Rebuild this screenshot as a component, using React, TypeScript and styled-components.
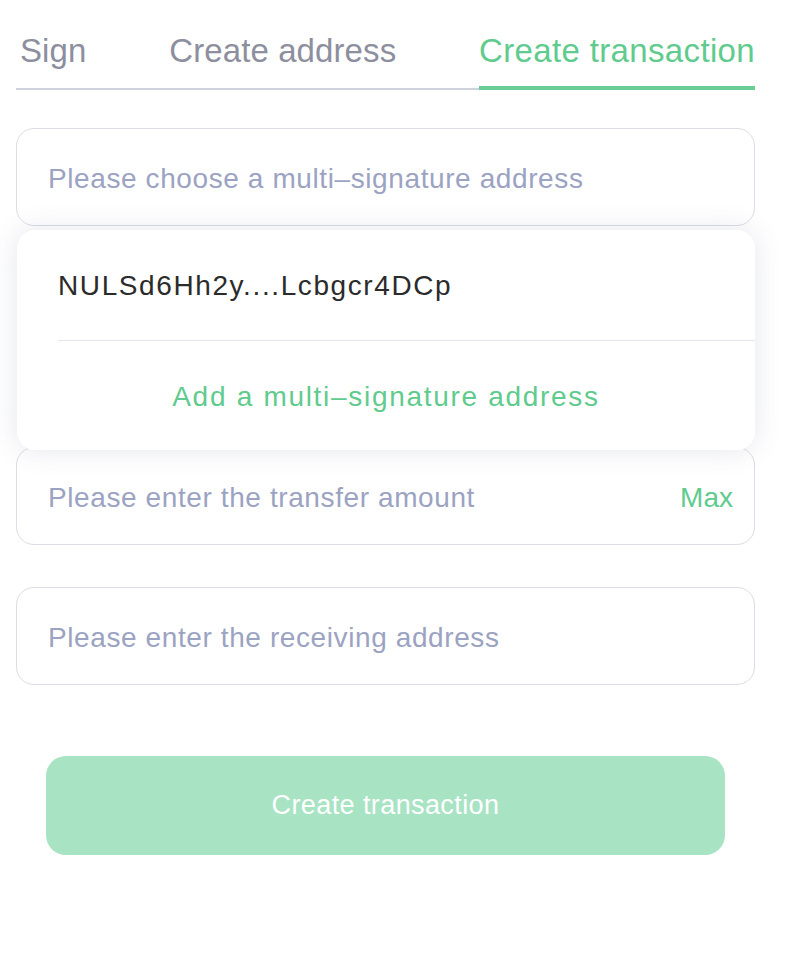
import React from "react";
import styled, { createGlobalStyle } from "styled-components";

const Global = createGlobalStyle`
  html, body { margin: 0; padding: 0; background: #ffffff; }
  body { font-family: "Liberation Sans", Arial, sans-serif; }
  * { box-sizing: border-box; }
`;

const Page = styled.div`
  width: 739px;
  margin-left: 16px;
  padding-top: 31px;
`;

const Tabs = styled.div`
  display: flex;
  justify-content: space-between;
  padding-left: 4px;
  border-bottom: 2px solid #cfd1dd;
`;

const Tab = styled.div<{ $active?: boolean }>`
  font-size: 33px;
  line-height: 40px;
  padding-bottom: 15px;
  margin-bottom: -2px;
  letter-spacing: ${(p) => (p.$active ? "0.35px" : "0.1px")};
  border-bottom: 4px solid ${(p) => (p.$active ? "#6bcd96" : "transparent")};
  color: ${(p) => (p.$active ? "#5fcb8e" : "#8d8f9e")};
  white-space: nowrap;
`;

const Form = styled.div`
  display: flex;
  flex-direction: column;
  margin-top: 38px;
`;

const SelectWrap = styled.div`
  position: relative;
  margin-bottom: 221px;
`;

const Field = styled.div<{ $gap?: number }>`
  height: 98px;
  border: 1px solid #dcdde6;
  border-radius: 18px;
  background: #ffffff;
  display: flex;
  align-items: center;
  justify-content: space-between;
  padding: 3px 21px 0 31px;
  margin-top: ${(p) => p.$gap ?? 0}px;
`;

const Placeholder = styled.span`
  font-size: 28px;
  letter-spacing: 0.6px;
  color: #9ca3c2;
  white-space: nowrap;
`;

const MaxLink = styled.span`
  font-size: 28px;
  color: #5fcb8e;
`;

const Menu = styled.div`
  position: absolute;
  left: 1px;
  right: 0;
  top: calc(100% + 4px);
  height: 220px;
  background: #ffffff;
  border-radius: 18px;
  box-shadow: 0 0 28px rgba(70, 80, 120, 0.14);
  z-index: 2;
  display: flex;
  flex-direction: column;
  padding-left: 41px;
`;

const MenuItem = styled.div<{ $center?: boolean; $divider?: boolean }>`
  flex: 1;
  display: flex;
  align-items: center;
  justify-content: ${(p) => (p.$center ? "center" : "flex-start")};
  margin-left: ${(p) => (p.$center ? "-41px" : "0")};
  padding-top: 3px;
  font-size: 28px;
  letter-spacing: ${(p) => (p.$center ? "1.7px" : "1.6px")};
  color: ${(p) => (p.$center ? "#5fcb8e" : "#2b2b2b")};
  border-bottom: ${(p) => (p.$divider ? "1px solid #e4e6ee" : "none")};
  white-space: nowrap;
`;

const Button = styled.button`
  margin: 71px 30px 0;
  height: 99px;
  border: none;
  border-radius: 20px;
  background: #a8e3c4;
  color: #ffffff;
  font-family: "Liberation Sans", Arial, sans-serif;
  font-size: 27px;
  letter-spacing: 0.4px;
  cursor: pointer;
`;

export default function App() {
  return (
    <>
      <Global />
      <Page>
        <Tabs>
          <Tab>Sign</Tab>
          <Tab>Create address</Tab>
          <Tab $active>Create transaction</Tab>
        </Tabs>
        <Form>
          <SelectWrap>
            <Field>
              <Placeholder>Please choose a multi–signature address</Placeholder>
            </Field>
            <Menu>
              <MenuItem $divider>NULSd6Hh2y....Lcbgcr4DCp</MenuItem>
              <MenuItem $center>Add a multi–signature address</MenuItem>
            </Menu>
          </SelectWrap>
          <Field>
            <Placeholder>Please enter the transfer amount</Placeholder>
            <MaxLink>Max</MaxLink>
          </Field>
          <Field $gap={42}>
            <Placeholder>Please enter the receiving address</Placeholder>
          </Field>
          <Button>Create transaction</Button>
        </Form>
      </Page>
    </>
  );
}
